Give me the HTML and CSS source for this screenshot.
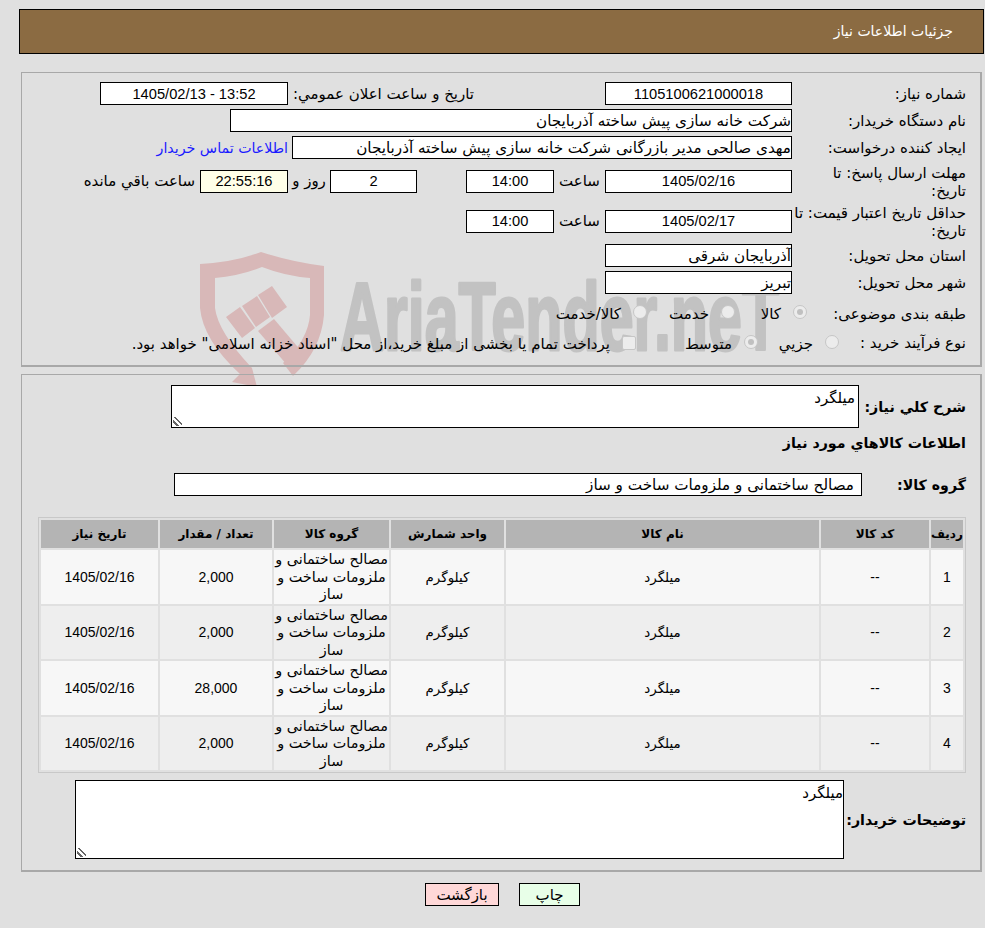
FILE: index.html
```html
<!DOCTYPE html>
<html lang="fa" dir="rtl">
<head>
<meta charset="utf-8">
<title>جزئیات اطلاعات نیاز</title>
<link rel="stylesheet" href="styles.css">
</head>
<body>
<svg class="watermark" width="700" height="160" viewBox="200 248 700 160" aria-hidden="true">
  <path class="wm-red" d="M200 264 Q235 262 261 252 Q292 262 324 266 L324 315 Q321 350 293 376 L283 363 Q308 340 310 315 L310 278 Q285 276 262 267 Q240 276 215 278 L215 308 Q218 332 252 368 L257 387 L232 382 L240 374 Q203 340 200 308 Z"/>
  <path class="wm-red" d="M258 331 L274 319 L302 352 L293 372 Z"/>
  <path class="wm-red" d="M226 317 L240 307 L255 328 L242 338 Z M242 306 L257 296 L270 317 L256 327 Z M258 295 L272 286 L287 307 L272 318 Z"/>
  <text class="wm-text" transform="translate(340 350) scale(.635 1)" x="0" y="0" direction="ltr">AriaTender.neT</text>
</svg>
<div class="page">
  <header class="title-bar">جزئیات اطلاعات نیاز</header>

  <section class="panel panel-form">
    <div class="row">
      <div class="label">شماره نیاز:</div>
      <div class="box box-date num">1105100621000018</div>
      <div class="inline-label label-public">تاریخ و ساعت اعلان عمومي:</div>
      <div class="box box-public num">13:52 - 1405/02/13</div>
    </div>
    <div class="row">
      <div class="label">نام دستگاه خریدار:</div>
      <div class="box box-wide box-start">شرکت خانه سازی پیش ساخته آذربایجان</div>
    </div>
    <div class="row">
      <div class="label">ایجاد کننده درخواست:</div>
      <div class="box box-creator box-start">مهدی صالحی مدیر بازرگانی شرکت خانه سازی پیش ساخته آذربایجان</div>
      <a class="contact" href="#">اطلاعات تماس خریدار</a>
    </div>
    <div class="row row-tall">
      <div class="label">مهلت ارسال پاسخ: تا<br>تاریخ:</div>
      <div class="box box-date num">1405/02/16</div>
      <div class="inline-label label-hour">ساعت</div>
      <div class="box box-time num">14:00</div>
      <div class="box box-days num">2</div>
      <div class="inline-label label-days">روز و</div>
      <div class="box box-remain num">22:55:16</div>
      <div class="inline-label label-remain">ساعت باقي مانده</div>
    </div>
    <div class="row row-tall row-tall-last">
      <div class="label">حداقل تاریخ اعتبار قیمت: تا<br>تاریخ:</div>
      <div class="box box-date num">1405/02/17</div>
      <div class="inline-label label-hour">ساعت</div>
      <div class="box box-time num">14:00</div>
    </div>
    <div class="row">
      <div class="label">استان محل تحویل:</div>
      <div class="box box-date box-start">آذربایجان شرقی</div>
    </div>
    <div class="row">
      <div class="label">شهر محل تحویل:</div>
      <div class="box box-date box-start">تبریز</div>
    </div>
    <div class="row row-kind">
      <div class="label">طبقه بندی موضوعی:</div>
      <span class="radio radio-on"></span><span class="opt o-a">کالا</span>
      <span class="radio"></span><span class="opt o-b">خدمت</span>
      <span class="radio"></span><span class="opt">کالا/خدمت</span>
    </div>
    <div class="row row-process">
      <div class="label">نوع فرآیند خرید :</div>
      <span class="radio"></span><span class="opt o-d">جزیي</span>
      <span class="radio radio-on"></span><span class="opt o-e">متوسط</span>
      <span class="check"></span><span class="opt">پرداخت تمام یا بخشی از مبلغ خرید،از محل "اسناد خزانه اسلامی" خواهد بود.</span>
    </div>
  </section>

  <section class="panel panel-items">
    <div class="desc-row">
      <div class="label-bold label-desc">شرح کلي نیاز:</div>
      <div class="area area-desc">میلگرد<i class="grip"></i></div>
    </div>
    <h2 class="items-title">اطلاعات کالاهاي مورد نیاز</h2>
    <div class="group-row">
      <div class="label-bold label-group">گروه کالا:</div>
      <div class="box box-group box-start">مصالح ساختمانی و ملزومات ساخت و ساز</div>
    </div>
    <div class="table-wrap">
      <table class="items">
        <colgroup>
          <col class="c1"><col class="c2"><col class="c3"><col class="c4"><col class="c5"><col class="c6"><col class="c7">
        </colgroup>
        <thead>
          <tr><th>ردیف</th><th>کد کالا</th><th>نام کالا</th><th>واحد شمارش</th><th>گروه کالا</th><th>تعداد / مقدار</th><th>تاریخ نیاز</th></tr>
        </thead>
        <tbody>
          <tr><td>1</td><td>--</td><td>میلگرد</td><td>کیلوگرم</td><td>مصالح ساختمانی و ملزومات ساخت و ساز</td><td>2,000</td><td>1405/02/16</td></tr>
          <tr><td>2</td><td>--</td><td>میلگرد</td><td>کیلوگرم</td><td>مصالح ساختمانی و ملزومات ساخت و ساز</td><td>2,000</td><td>1405/02/16</td></tr>
          <tr><td>3</td><td>--</td><td>میلگرد</td><td>کیلوگرم</td><td>مصالح ساختمانی و ملزومات ساخت و ساز</td><td>28,000</td><td>1405/02/16</td></tr>
          <tr><td>4</td><td>--</td><td>میلگرد</td><td>کیلوگرم</td><td>مصالح ساختمانی و ملزومات ساخت و ساز</td><td>2,000</td><td>1405/02/16</td></tr>
        </tbody>
      </table>
    </div>
    <div class="note-row">
      <div class="label-bold label-note">توضیحات خریدار:</div>
      <div class="area area-note">میلگرد<i class="grip"></i></div>
    </div>
  </section>

  <div class="actions">
    <button class="btn btn-print" type="button">چاپ</button>
    <button class="btn btn-back" type="button">بازگشت</button>
  </div>
</div>
</body>
</html>
```
FILE: styles.css
```css
* { box-sizing: border-box; }
html, body { margin: 0; padding: 0; }
body {
  background: #e0e0e0;
  color: #000;
  font-family: "DejaVu Sans", sans-serif;
  font-size: 15px;
  height: 928px;
  overflow: hidden;
  position: relative;
}
.watermark { position: absolute; left: 200px; top: 248px; direction: ltr; }
.wm-red { fill: #d8b8b8; }
.wm-text { fill: #c2c2c2; stroke: #c2c2c2; stroke-width: 3px; stroke-linejoin: round; font-family: "Liberation Sans", sans-serif; font-weight: 700; font-size: 96px; }
.page { position: relative; padding: 9px 1px 0 19px; direction: rtl; }
.title-bar {
  height: 45px;
  background: #8b6b42;
  border: 1px solid #000;
  color: #fff;
  padding: 0 30px 0 0;
  line-height: 43px;
  font-size: 14px;
}
.panel { border-style: solid; border-width: 1px 2px 2px 1px; border-color: #a8a8a8; margin: 0 2px; }
.panel-form { margin-top: 18px; height: 295px; padding: 9px 14px 0 0; }
.panel-items { margin-top: 7px; height: 498px; padding: 10px 14px 0 0; }
.row { display: flex; align-items: center; height: 23px; margin-bottom: 4px; }
.label { width: 174px; flex: none; line-height: 18px; }
.box {
  height: 23px;
  border: 1px solid #000;
  background: #fff;
  display: flex;
  align-items: center;
  justify-content: center;
  flex: none;
  font-size: 15.2px;
  overflow: hidden;
  white-space: nowrap;
}
.num { font-family: "Liberation Sans", sans-serif; font-size: 14.67px; }
.box-start { justify-content: flex-start; }
.box-date { width: 187px; }
.inline-label { flex: none; }
.label-public { width: 317px; padding-right: 131px; }
.box-public { width: 188px; }
.box-wide { width: 562px; }
.box-creator { width: 500px; }
.contact { color: #1a1aff; text-decoration: none; margin-right: 4px; font-size: 14.2px; }
.row-tall { height: 36px; }
.row-tall .label { padding-top: 2px; }
.row-tall-last { margin-bottom: 5px; }
.label-hour { width: 51px; text-align: center; }
.box-time { width: 88px; }
.box-days { width: 87px; margin-right: 49px; }
.label-days { width: 42px; text-align: center; }
.box-remain { width: 88px; background: #ffffe8; }
.label-remain { margin-right: 5px; }
.row-kind { height: 28px; }
.row-kind .label { width: 159px; }
.row-kind .radio { top: 0; }
.row-kind .opt, .row-kind .label { padding-top: 3px; }
.row-process { height: 26px; }
.row-process .label { width: 127px; }
.row-process .opt { padding-top: 2px; }
.radio {
  width: 14px; height: 14px; border-radius: 50%;
  border: 1px solid #c6c6c6; background: #ececec;
  flex: none; position: relative; top: -1px;
}
.radio-on::after { content: ""; position: absolute; left: 3px; top: 3px; width: 6px; height: 6px; border-radius: 50%; background: #c0c0c0; }
.check { width: 14px; height: 14px; border: 1px solid #c6c6c6; border-radius: 2px; background: #ececec; flex: none; }
.opt { flex: none; margin-right: 12px; }
.o-a { width: 46px; }
.o-b { width: 62px; }
.o-d { width: 55px; }
.o-e { width: 96px; }
.label-bold { font-weight: 700; font-size: 14.2px; flex: none; }
.desc-row { display: flex; align-items: center; }
.label-desc { width: 107px; }
.area { background: #fff; border: 1px solid #000; position: relative; padding: 3px 3px 0 0; flex: none; line-height: 18px; font-size: 15px; }
.area-desc { width: 688px; height: 43px; }
.area-note { width: 769px; height: 79px; padding-right: 0; }
.grip {
  position: absolute; left: 1px; bottom: 1px; width: 9px; height: 9px;
  background: linear-gradient(45deg, transparent 22%, #666 22%, #666 34%, transparent 34%, transparent 52%, #666 52%, #666 66%, transparent 66%);
}
.items-title { font-size: 14.2px; margin: 6px 0 0; line-height: 18px; height: 18px; }
.group-row { display: flex; align-items: center; margin-top: 21px; }
.label-group { width: 104px; }
.box-group { width: 688px; padding-right: 7px; }
.table-wrap { margin-top: 21px; border: 1px solid #c8c8c8; width: 928px; }
.items { width: 926px; border-collapse: separate; border-spacing: 2px; table-layout: fixed; }
.c1 { width: 32px; } .c2 { width: 108px; } .c3 { width: 313px; } .c4 { width: 113px; }
.c5 { width: 115px; } .c6 { width: 112px; } .c7 { width: 117px; }
.items th { background: #b4b4b4; height: 28px; font-size: 12px; font-weight: 700; padding: 0; }
.items td { height: 53.5px; text-align: center; padding: 1px 2px 0; line-height: 17.5px; font-size: 13.4px; }
.items td:nth-child(1), .items td:nth-child(2), .items td:nth-child(6), .items td:nth-child(7) { font-family: "Liberation Sans", sans-serif; font-size: 14px; }
.items td:nth-child(5) { font-size: 14.4px; padding: 1px 0 0; }
.items tbody tr:nth-child(odd) td { background: #f7f7f7; }
.items tbody tr:nth-child(even) td { background: #eeeeee; }
.note-row { display: flex; align-items: center; margin-top: 7px; }
.label-note { width: 122px; }
.actions { display: flex; justify-content: center; gap: 20px; margin-top: 11px; margin-left: 2px; }
.btn { height: 23px; border: 1px solid #000; font: 15px "DejaVu Sans", sans-serif; padding: 0; color: #000; }
.btn-print { width: 61px; background: #e8ffe8; }
.btn-back { width: 74px; background: #ffd8d8; }
```
